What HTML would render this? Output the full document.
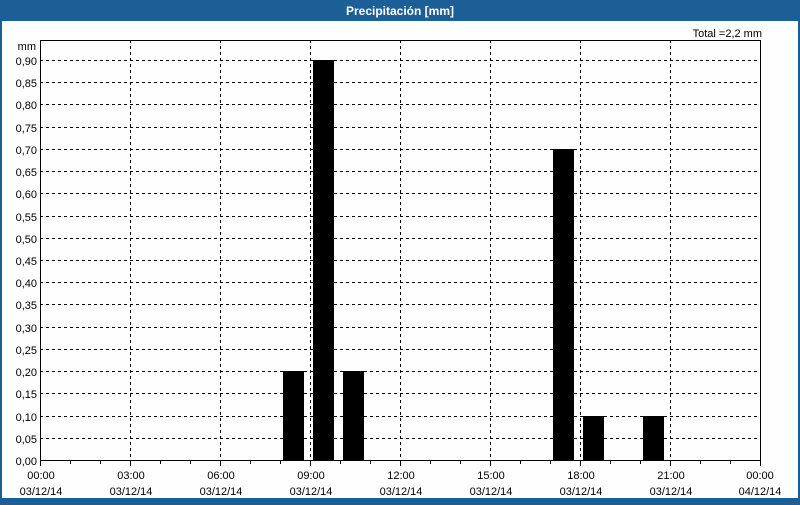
<!DOCTYPE html>
<html><head><meta charset="utf-8"><style>
body{margin:0;width:800px;height:500px;overflow:hidden;background:#1c5f96;font-family:"Liberation Sans",sans-serif;}
</style></head><body>
<svg width="800" height="500" xmlns="http://www.w3.org/2000/svg" font-family="Liberation Sans, sans-serif" font-size="11">
<rect x="0" y="0" width="800" height="500" fill="#1c5f96"/>
<rect x="2" y="21" width="796" height="477" fill="#fdfefd"/>
<text x="400" y="15" fill="#fff" font-weight="bold" font-size="12" text-anchor="middle">Precipitación [mm]</text>
<text x="762" y="37" text-anchor="end" fill="#000">Total =2,2 mm</text>
<text x="36" y="50" text-anchor="end">mm</text>
<g stroke="#000" stroke-width="1" stroke-dasharray="3,3" shape-rendering="crispEdges">
<line x1="40" x2="760" y1="60.5" y2="60.5"/><line x1="40" x2="760" y1="82.5" y2="82.5"/><line x1="40" x2="760" y1="104.5" y2="104.5"/><line x1="40" x2="760" y1="127.5" y2="127.5"/><line x1="40" x2="760" y1="149.5" y2="149.5"/><line x1="40" x2="760" y1="171.5" y2="171.5"/><line x1="40" x2="760" y1="193.5" y2="193.5"/><line x1="40" x2="760" y1="216.5" y2="216.5"/><line x1="40" x2="760" y1="238.5" y2="238.5"/><line x1="40" x2="760" y1="260.5" y2="260.5"/><line x1="40" x2="760" y1="282.5" y2="282.5"/><line x1="40" x2="760" y1="304.5" y2="304.5"/><line x1="40" x2="760" y1="327.5" y2="327.5"/><line x1="40" x2="760" y1="349.5" y2="349.5"/><line x1="40" x2="760" y1="371.5" y2="371.5"/><line x1="40" x2="760" y1="393.5" y2="393.5"/><line x1="40" x2="760" y1="416.5" y2="416.5"/><line x1="40" x2="760" y1="438.5" y2="438.5"/>
<line y1="40" y2="460" x1="130.5" x2="130.5"/><line y1="40" y2="460" x1="220.5" x2="220.5"/><line y1="40" y2="460" x1="310.5" x2="310.5"/><line y1="40" y2="460" x1="400.5" x2="400.5"/><line y1="40" y2="460" x1="490.5" x2="490.5"/><line y1="40" y2="460" x1="580.5" x2="580.5"/><line y1="40" y2="460" x1="670.5" x2="670.5"/>
</g>
<g fill="#000">
<rect x="283" y="371" width="21" height="89"/>
<rect x="313" y="60" width="21" height="400"/>
<rect x="343" y="371" width="21" height="89"/>
<rect x="553" y="149" width="21" height="311"/>
<rect x="583" y="416" width="21" height="44"/>
<rect x="643" y="416" width="21" height="44"/>
</g>
<rect x="40.5" y="40.5" width="720" height="420" fill="none" stroke="#000" shape-rendering="crispEdges"/>
<g stroke="#000" shape-rendering="crispEdges">
<path d="M70.5 461v3M100.5 461v3M160.5 461v3M190.5 461v3M250.5 461v3M280.5 461v3M340.5 461v3M370.5 461v3M430.5 461v3M460.5 461v3M520.5 461v3M550.5 461v3M610.5 461v3M640.5 461v3M700.5 461v3M730.5 461v3M40.5 461v5M130.5 461v5M220.5 461v5M310.5 461v5M400.5 461v5M490.5 461v5M580.5 461v5M670.5 461v5M760.5 461v5"/>
</g>
<g text-anchor="end">
<text x="37" y="65">0,90</text><text x="37" y="87">0,85</text><text x="37" y="109">0,80</text><text x="37" y="132">0,75</text><text x="37" y="154">0,70</text><text x="37" y="176">0,65</text><text x="37" y="198">0,60</text><text x="37" y="221">0,55</text><text x="37" y="243">0,50</text><text x="37" y="265">0,45</text><text x="37" y="287">0,40</text><text x="37" y="309">0,35</text><text x="37" y="332">0,30</text><text x="37" y="354">0,25</text><text x="37" y="376">0,20</text><text x="37" y="398">0,15</text><text x="37" y="421">0,10</text><text x="37" y="443">0,05</text><text x="37" y="465">0,00</text>
</g>
<g text-anchor="middle">
<text x="41" y="479">00:00</text><text x="41" y="495">03/12/14</text>
<text x="131" y="479">03:00</text><text x="131" y="495">03/12/14</text>
<text x="221" y="479">06:00</text><text x="221" y="495">03/12/14</text>
<text x="311" y="479">09:00</text><text x="311" y="495">03/12/14</text>
<text x="401" y="479">12:00</text><text x="401" y="495">03/12/14</text>
<text x="491" y="479">15:00</text><text x="491" y="495">03/12/14</text>
<text x="581" y="479">18:00</text><text x="581" y="495">03/12/14</text>
<text x="671" y="479">21:00</text><text x="671" y="495">03/12/14</text>
<text x="760" y="479">00:00</text><text x="760" y="495">04/12/14</text>
</g>
</svg>
</body></html>
